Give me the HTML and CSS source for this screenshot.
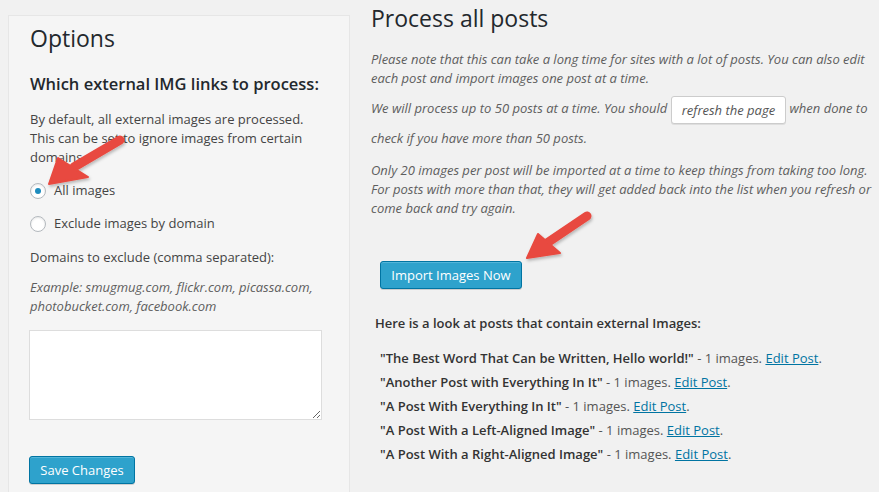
FILE: index.html
```html
<!DOCTYPE html>
<html lang="en">
<head>
    <meta charset="UTF-8">
    <title>Import External Images</title>
    <link rel="stylesheet" href="styles.css">
</head>
<body>

<div class="page">
    <!-- options panel -->
    <div class="panel">
        <h2 class="panel-title">Options</h2>
        <h3>Which external IMG links to process:</h3>
        <p>By default, all external images are processed. This can be set to ignore images from certain domains.</p>

        <label class="radio"><span class="radio-dot checked"></span>All images</label>
        <label class="radio"><span class="radio-dot"></span>Exclude images by domain</label>

        <p class="field-label">Domains to exclude (comma separated):</p>
        <p class="hint">Example: smugmug.com, flickr.com, picassa.com, photobucket.com, facebook.com</p>
        <textarea class="domains"></textarea>

        <button class="btn btn-primary save">Save Changes</button>
    </div>

    <!-- process column -->
    <div class="main">
        <h2 class="main-title">Process all posts</h2>
        <p class="note">Please note that this can take a long time for sites with a lot of posts. You can also edit each post and import images one post at a time.</p>
        <p class="note">We will process up to 50 posts at a time. You should <button class="btn btn-plain">refresh the page</button> when done to check if you have more than 50 posts.</p>
        <p class="note">Only 20 images per post will be imported at a time to keep things from taking too long. For posts with more than that, they will get added back into the list when you refresh or come back and try again.</p>

        <button class="btn btn-primary import">Import Images Now</button>

        <p class="list-head">Here is a look at posts that contain external Images:</p>
        <ul class="posts">
            <li><b>"The Best Word That Can be Written, Hello world!"</b> - 1 images. <a href="#">Edit Post</a>.</li>
            <li><b>"Another Post with Everything In It"</b> - 1 images. <a href="#">Edit Post</a>.</li>
            <li><b>"A Post With Everything In It"</b> - 1 images. <a href="#">Edit Post</a>.</li>
            <li><b>"A Post With a Left-Aligned Image"</b> - 1 images. <a href="#">Edit Post</a>.</li>
            <li><b>"A Post With a Right-Aligned Image"</b> - 1 images. <a href="#">Edit Post</a>.</li>
        </ul>
    </div>
</div>

<!-- red callout arrows -->
<svg class="arrows" width="879" height="492" viewBox="0 0 879 492">
    <defs>
        <filter id="shadow" x="-20%" y="-20%" width="140%" height="140%">
            <feDropShadow dx="1" dy="2" stdDeviation="1.5" flood-color="#000" flood-opacity="0.25"/>
        </filter>
    </defs>
    <g fill="#e8493f" stroke="#e8493f" filter="url(#shadow)">
        <line x1="120" y1="140" x2="74" y2="167" stroke-width="9" stroke-linecap="round"/>
        <polygon points="49,184 58,158 88,177" stroke-width="2" stroke-linejoin="round"/>
    </g>
    <g fill="#e8493f" stroke="#e8493f" filter="url(#shadow)">
        <line x1="587" y1="216" x2="547" y2="243" stroke-width="9" stroke-linecap="round"/>
        <polygon points="527,258 538,234 560,253" stroke-width="2" stroke-linejoin="round"/>
    </g>
</svg>

</body>
</html>
```

FILE: styles.css
```css
body {
    margin: 0;
    background-color: #f1f1f1;
    color: #444;
    font-family: "Open Sans", sans-serif;
    font-size: 13px;
    overflow: hidden;
    height: 492px;
    position: relative;
}
.page {
    display: flex;
    align-items: flex-start;
    height: 492px;
    overflow: hidden;
}
.panel {
    margin: 15px 0 0 8px;
    width: 319px;
    height: 500px;
    padding: 0 0 0 21px;
    background-color: #f5f5f5;
    border: 1px solid #e6e6e6;
    box-sizing: content-box;
    flex-shrink: 0;
}
.panel-title {
    font-size: 23px;
    font-weight: 400;
    color: #23282d;
    margin: 7px 0 0;
    line-height: 30px;
}
.panel h3 {
    font-size: 16.5px;
    font-weight: 600;
    color: #23282d;
    margin: 19px 0 0;
    line-height: 24px;
}
.panel p {
    margin: 0;
    line-height: 19px;
    width: 300px;
}
.panel > p:first-of-type {
    margin-top: 14px;
}
.radio {
    display: flex;
    align-items: center;
    gap: 8px;
    margin-top: 14px;
    line-height: 19px;
}
.radio + .radio {
    margin-top: 14px;
}
.radio-dot {
    width: 14px;
    height: 14px;
    border: 1px solid #b4b9be;
    border-radius: 50%;
    background-color: #fff;
    box-shadow: inset 0 1px 2px rgba(0, 0, 0, 0.1);
    display: flex;
    align-items: center;
    justify-content: center;
}
.radio-dot.checked::after {
    content: "";
    width: 6px;
    height: 6px;
    border-radius: 50%;
    background-color: #1e8cbe;
}
.panel .field-label {
    margin-top: 15px;
}
.panel .hint {
    margin-top: 11px;
    font-style: italic;
    color: #5e5e5e;
}
.domains {
    display: block;
    width: 293px;
    height: 90px;
    margin: 14px 0 0 -1px;
    border: 1px solid #ddd;
    background-color: #fff;
    box-sizing: border-box;
    resize: vertical;
}
.btn {
    font-family: "Open Sans", sans-serif;
    font-size: 13px;
    border-radius: 3px;
    cursor: pointer;
    box-sizing: border-box;
}
.btn-primary {
    background-color: #2ea2cc;
    border: 1px solid #0074a2;
    color: #fff;
    height: 28px;
    padding: 0 10px;
    box-shadow: inset 0 1px 0 rgba(120, 200, 230, 0.5), 0 1px 0 rgba(0, 0, 0, 0.15);
}
.save {
    display: block;
    margin: 36px 0 0 -1px;
    width: 106px;
}
.main {
    margin-left: 21px;
    width: 504px;
}
.main-title {
    font-size: 23px;
    font-weight: 400;
    color: #23282d;
    margin: 3px 0 0;
    line-height: 30px;
}
.note {
    font-style: italic;
    color: #5e5e5e;
    margin: 0;
    line-height: 19px;
}
.note:first-of-type {
    margin-top: 17px;
}
.note:nth-of-type(2) {
    line-height: 28px;
    margin-top: 6px;
}
.note:nth-of-type(3) {
    margin-top: 9px;
}
.btn-plain {
    background-color: #fff;
    border: 1px solid #ccc;
    color: #555;
    font-style: italic;
    height: 28px;
    padding: 0 10px;
    box-shadow: 0 1px 0 rgba(0, 0, 0, 0.08);
    vertical-align: middle;
}
.import {
    display: block;
    margin: 43px 0 0 9px;
    width: 142px;
}
.list-head {
    font-weight: 600;
    color: #333;
    margin: 25px 0 0 4px;
}
.posts {
    list-style: none;
    margin: 14px 0 0 9px;
    padding: 0;
}
.posts li {
    line-height: 24px;
    color: #555;
}
.posts b {
    font-weight: 600;
    color: #333;
}
.posts a {
    color: #0074a2;
}
.arrows {
    position: absolute;
    top: 0;
    left: 0;
    pointer-events: none;
}
```
